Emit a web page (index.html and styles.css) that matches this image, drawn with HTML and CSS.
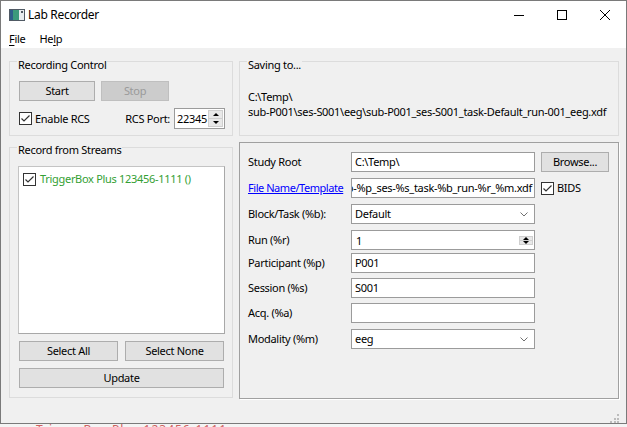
FILE: index.html
```html
<!DOCTYPE html>
<html>
<head>
<meta charset="utf-8">
<title>Lab Recorder</title>
<link rel="stylesheet" href="styles.css">
</head>
<body>
<div class="window">
  <div class="titlebar">
    <svg class="app-icon" width="16" height="12" viewBox="0 0 16 12">
      <rect x="0.5" y="0.5" width="15" height="11" fill="#ffffff" stroke="#505a64"/>
      <rect x="1" y="1" width="3" height="10" fill="#2f5f8a"/>
      <rect x="4" y="1" width="6" height="10" fill="#3c9a7c"/>
      <rect x="10" y="1" width="5" height="10" fill="#e8ecef"/>
      <rect x="12" y="2" width="2" height="2" fill="#505a64"/>
    </svg>
    <span class="title">Lab Recorder</span>
    <div class="caption-buttons">
      <span class="cap"><svg width="10" height="10" viewBox="0 0 10 10"><line x1="0" y1="5.5" x2="10" y2="5.5" stroke="#000" stroke-width="1"/></svg></span>
      <span class="cap"><svg width="10" height="10" viewBox="0 0 10 10"><rect x="0.5" y="0.5" width="9" height="9" fill="none" stroke="#000" stroke-width="1"/></svg></span>
      <span class="cap"><svg width="10" height="10" viewBox="0 0 10 10"><path d="M0 0 L10 10 M10 0 L0 10" stroke="#000" stroke-width="1"/></svg></span>
    </div>
  </div>
  <div class="menubar">
    <span class="menu"><u>F</u>ile</span>
    <span class="menu">He<u>l</u>p</span>
  </div>
  <div class="client">
    <div class="layout">
      <section class="group rec-control">
        <div class="group-title">Recording Control</div>
        <div class="btn-row">
          <button class="btn start">Start</button>
          <button class="btn stop" disabled>Stop</button>
        </div>
        <div class="rcs-row">
          <span class="check-label"><span class="checkbox checked"><svg width="11" height="11" viewBox="0 0 11 11"><polyline points="1.5,5.5 4,8 9.5,2.5" fill="none" stroke="#333" stroke-width="1.2"/></svg></span>Enable RCS</span>
          <span class="port-label">RCS Port:</span>
          <span class="spinbox port"><span class="spin-text">22345</span><span class="spin-arrows"><span class="arr up"></span><span class="arr down"></span></span></span>
        </div>
      </section>

      <section class="group saving">
        <div class="group-title">Saving to...</div>
        <div class="save-path">C:\Temp\<br>sub-P001\ses-S001\eeg\sub-P001_ses-S001_task-Default_run-001_eeg.xdf</div>
      </section>

      <section class="group streams">
        <div class="group-title">Record from Streams</div>
        <div class="stream-list">
          <div class="stream-item"><span class="checkbox checked"><svg width="11" height="11" viewBox="0 0 11 11"><polyline points="1.5,5.5 4,8 9.5,2.5" fill="none" stroke="#333" stroke-width="1.2"/></svg></span><span class="stream-name">TriggerBox Plus 123456-1111 ()</span></div>
        </div>
        <div class="select-row">
          <button class="btn">Select All</button>
          <button class="btn">Select None</button>
        </div>
        <button class="btn update">Update</button>
      </section>

      <div class="frame">
        <div class="form">
          <span class="lbl">Study Root</span>
          <span class="edit">C:\Temp\</span>
          <button class="btn browse">Browse...</button>

          <a class="lbl link" href="#">File Name/Template</a>
          <span class="edit clip"><span class="edit-text">sub-%p_ses-%s_task-%b_run-%r_%m.xdf</span></span>
          <span class="check-label bids"><span class="checkbox checked"><svg width="11" height="11" viewBox="0 0 11 11"><polyline points="1.5,5.5 4,8 9.5,2.5" fill="none" stroke="#333" stroke-width="1.2"/></svg></span>BIDS</span>

          <span class="lbl">Block/Task (%b):</span>
          <span class="edit combo"><span>Default</span><svg class="chev" width="8" height="5" viewBox="0 0 8 5"><polyline points="0.5,0.5 4,4 7.5,0.5" fill="none" stroke="#707070" stroke-width="1"/></svg></span>
          <span></span>

          <span class="lbl">Run (%r)</span>
          <span class="edit spinbox run"><span class="spin-text">1</span><span class="spin-arrows"><span class="arr up"></span><span class="arr down"></span></span></span>
          <span></span>

          <span class="lbl">Participant (%p)</span>
          <span class="edit">P001</span>
          <span></span>

          <span class="lbl">Session (%s)</span>
          <span class="edit">S001</span>
          <span></span>

          <span class="lbl">Acq. (%a)</span>
          <span class="edit"></span>
          <span></span>

          <span class="lbl">Modality (%m)</span>
          <span class="edit combo"><span>eeg</span><svg class="chev" width="8" height="5" viewBox="0 0 8 5"><polyline points="0.5,0.5 4,4 7.5,0.5" fill="none" stroke="#707070" stroke-width="1"/></svg></span>
          <span></span>
        </div>
      </div>
    </div>
    <div class="grip"><i></i><i></i><i></i><i></i><i></i><i></i></div>
  </div>
</div>
<div class="behind"><span>TriggerBox Plus 123456-1111</span></div>
</body>
</html>
```
FILE: styles.css
```css
* { box-sizing: border-box; }
html, body { margin: 0; padding: 0; }
body {
  width: 627px;
  height: 427px;
  overflow: hidden;
  background: #f0f0f0;
  font-family: "Noto Sans", "Open Sans", sans-serif;
  font-size: 11px;
  letter-spacing: -0.3px;
  color: #000;
}
.window {
  width: 627px;
  height: 424px;
  border: 1px solid #7a7a7a;
  display: flex;
  flex-direction: column;
  background: #f0f0f0;
}
.titlebar {
  height: 29px;
  background: #fff;
  display: flex;
  align-items: center;
  padding-left: 8px;
  padding-bottom: 1px;
}
.app-icon { display: block; margin-right: 3px; }
.title { line-height: 16px; font-size: 12px; }
.caption-buttons { margin-left: auto; display: flex; height: 100%; }
.cap { width: 43px; display: flex; align-items: center; justify-content: center; }
.cap svg { display: block; }
.menubar {
  height: 18px;
  background: #fff;
  display: flex;
  align-items: center;
  padding-left: 8px;
}
.menu { line-height: 16px; margin-right: 14px; }
.menu u { text-decoration-thickness: 1px; text-underline-offset: 2px; }
.client {
  flex: 1;
  padding: 13px 6px 0 8px;
  display: flex;
  flex-direction: column;
}
.layout {
  display: grid;
  grid-template-columns: 224px 380px;
  grid-template-rows: 75px 257px;
  column-gap: 6px;
  row-gap: 6px;
}
.group {
  border: 1px solid #dcdcdc;
  display: flex;
  flex-direction: column;
  align-items: flex-start;
}
.group-title {
  margin-top: -5px;
  margin-left: 7px;
  padding: 0 1px;
  line-height: 16px;
  background: #f0f0f0;
}
.btn {
  font: inherit;
  letter-spacing: inherit;
  color: #000;
  height: 20px;
  padding: 0;
  background: #e1e1e1;
  border: 1px solid #adadad;
  line-height: 16px;
}
.btn:disabled { background: #cccccc; border-color: #bfbfbf; color: #9a9a9a; }
.btn-row { display: flex; gap: 6px; margin-top: 8px; margin-left: 9px; }
.btn.start { width: 76px; }
.btn.stop { width: 68px; }
.rcs-row { display: flex; align-items: center; margin-top: 7px; margin-left: 9px; height: 21px; width: 206px; }
.check-label { display: inline-flex; align-items: center; line-height: 16px; }
.checkbox {
  width: 13px; height: 13px;
  border: 1px solid #333;
  background: #fff;
  display: inline-flex;
  align-items: center;
  justify-content: center;
  margin-right: 3px;
  flex: none;
}
.checkbox svg { display: block; }
.port-label { margin-left: auto; margin-right: 4px; }
.spinbox {
  display: inline-flex;
  align-items: stretch;
  background: #fff;
  border: 1px solid #9b9b9b;
}
.spinbox.port { width: 51px; height: 21px; padding: 1px; }
.spin-text { flex: 1; padding-left: 1px; line-height: 17px; }
.spin-arrows {
  width: 15px;
  display: flex;
  flex-direction: column;
  border: 1px solid #cfcfcf;
  background: #e8e8e8;
}
.arr { flex: 1; display: flex; align-items: center; justify-content: center; }
.arr.up { border-bottom: 1px solid #cfcfcf; }
.arr::before {
  content: "";
  width: 0; height: 0;
  border-left: 3px solid transparent;
  border-right: 3px solid transparent;
}
.arr.up::before { border-bottom: 3px solid #000; }
.arr.down::before { border-top: 3px solid #000; }

.save-path { margin-top: 16px; margin-left: 8px; line-height: 15px; white-space: nowrap; }

.streams { margin-top: 5px; margin-bottom: 1px; }
.streams .group-title { margin-top: -6px; }
.stream-list {
  margin-top: 8px;
  margin-left: 8px;
  width: 207px;
  height: 168px;
  background: #fff;
  border: 1px solid #c4c4c4;
  border-right-color: #a8a8a8;
  border-bottom-color: #a8a8a8;
  padding: 4px 0 0 4px;
}
.stream-item { display: flex; align-items: center; height: 16px; }
.stream-item .checkbox { margin-right: 4px; }
.stream-name { color: #33a033; line-height: 16px; }
.select-row { display: flex; gap: 7px; margin-top: 7px; margin-left: 9px; }
.select-row .btn { width: 99px; }
.btn.update { width: 205px; margin-top: 7px; margin-left: 9px; }

.frame {
  border: 1px solid #a0a0a0;
  box-shadow: 1px 1px 0 #ffffff;
  padding: 9px 0 0 8px;
}
.form {
  display: grid;
  grid-template-columns: 97px 184px 68px;
  grid-template-rows: 26px 26px 26px 23px 25px 25px 26px 21px;
  column-gap: 6px;
  align-items: start;
}
.lbl { line-height: 20px; white-space: nowrap; }
.link { color: #0000ff; text-decoration: underline; letter-spacing: -0.45px; }
.edit {
  height: 20px;
  background: #fff;
  border: 1px solid #9b9b9b;
  padding: 0 3px;
  line-height: 18px;
  white-space: nowrap;
  overflow: hidden;
  display: flex;
  align-items: center;
}
.edit.clip { justify-content: flex-end; padding-right: 2px; }
.edit-text { flex: none; }
.combo { justify-content: space-between; padding-right: 6px; }
.chev { display: block; }
.spinbox.run { padding: 1px 1px 1px 3px; }
.spinbox.run .spin-arrows { width: 14px; }
.btn.browse { width: 68px; }
.bids { height: 20px; }

.grip {
  margin-top: auto;
  margin-left: auto;
  margin-right: 1px;
  width: 9px;
  height: 9px;
  display: grid;
  grid-template-columns: repeat(3, 2px);
  grid-template-rows: repeat(3, 2px);
  gap: 1.5px;
}
.grip i { background: #bcbcbc; }
.grip i:nth-child(1) { grid-column: 3; grid-row: 1; }
.grip i:nth-child(2) { grid-column: 2; grid-row: 2; }
.grip i:nth-child(3) { grid-column: 3; grid-row: 2; }
.grip i:nth-child(4) { grid-column: 1; grid-row: 3; }
.grip i:nth-child(5) { grid-column: 2; grid-row: 3; }
.grip i:nth-child(6) { grid-column: 3; grid-row: 3; }

.behind {
  height: 3px;
  overflow: hidden;
  background: #f4f4f4;
  padding-left: 36px;
}
.behind span {
  display: block;
  color: #d06060;
  line-height: 12px;
  font-size: 12px;
  letter-spacing: 1px;
}
```
